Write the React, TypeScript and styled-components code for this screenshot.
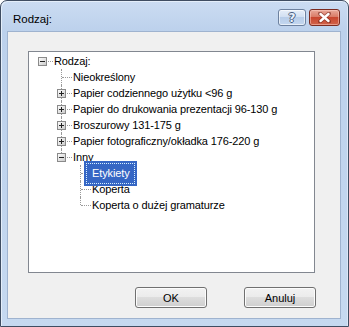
import React from 'react';
import styled, { createGlobalStyle, css } from 'styled-components';

const Global = createGlobalStyle`
  html, body { margin: 0; padding: 0; background: #ffffff; }
  body { width: 349px; height: 327px; overflow: hidden; }
  #root { width: 349px; height: 327px; }
`;

const Window = styled.div`
  box-sizing: border-box;
  width: 349px;
  height: 327px;
  border: 1px solid #3f4d62;
  border-radius: 7px 7px 0 0;
  background: linear-gradient(to bottom, #cbdcf2 0px, #bcd1ec 30px, #c1d5ee 60%, #c6d9f0 100%);
  box-shadow: inset 1px 1px 0 #e4eefa, inset -1px 0 0 #dbe7f6;
  display: flex;
  flex-direction: column;
  padding: 0 7px 7px 6px;
  font-family: "Liberation Sans", Arial, sans-serif;
`;

const TitleBar = styled.div`
  height: 30px;
  display: flex;
  align-items: flex-start;
  justify-content: space-between;
`;

const Title = styled.div`
  padding: 10px 0 0 6px;
  font-size: 11.5px;
  line-height: 16px;
  color: #000;
`;

const CaptionButtons = styled.div`
  display: flex;
  gap: 3px;
  padding-top: 8px;
  margin-right: 1px;
`;

const CaptionButton = styled.div<{ $kind: 'help' | 'close' }>`
  box-sizing: border-box;
  height: 17px;
  border-radius: 3px;
  display: flex;
  align-items: center;
  justify-content: center;
  ${p =>
    p.$kind === 'help'
      ? css`
          width: 28px;
          border: 1px solid #6d819f;
          background: linear-gradient(to bottom, #e6eef9 0%, #d2e0f2 45%, #b8cde9 50%, #c4d7ef 100%);
          box-shadow: inset 0 0 0 1px rgba(255, 255, 255, 0.6);
        `
      : css`
          width: 31px;
          border: 1px solid #7b2b20;
          background: linear-gradient(to bottom, #e9a99a 0%, #d97b67 45%, #c9462f 50%, #d0634a 100%);
          box-shadow: inset 0 0 0 1px rgba(255, 210, 200, 0.5);
        `}
`;

const HelpGlyph = styled.span`
  font-family: "DejaVu Sans", sans-serif;
  font-size: 12px;
  font-weight: bold;
  line-height: 12px;
  color: #e8f0fb;
  text-shadow: 1px 0 0 #4a5f80, -1px 0 0 #4a5f80, 0 1px 0 #4a5f80, 0 -1px 0 #4a5f80;
`;

const Client = styled.div`
  flex: 1;
  box-sizing: border-box;
  background: #f0f0f0;
  border: 1px solid #9fb3cf;
  padding: 19px 0 0 20px;
  display: flex;
  flex-direction: column;
`;

const Column = styled.div`
  width: 288px;
  display: flex;
  flex-direction: column;
`;

const TreeBox = styled.div`
  box-sizing: border-box;
  width: 287px;
  height: 222px;
  border: 1px solid #828790;
  background: #ffffff;
  padding: 1px 0 0 4px;
  display: flex;
  flex-direction: column;
  font-size: 11px;
  letter-spacing: -0.12px;
  color: #000;
`;

const Row = styled.div`
  display: flex;
  align-items: center;
  height: 16px;
`;

type CellKind = 'none' | 'pipe' | 'tee' | 'elbow' | 'root';

const dot = '#9a9a9a';

const Gutter = styled.div<{ $kind: CellKind }>`
  position: relative;
  width: 19px;
  height: 16px;
  flex: none;
  display: flex;
  align-items: center;
  padding-left: 5px;
  box-sizing: border-box;
  ${p =>
    (p.$kind === 'pipe' || p.$kind === 'tee' || p.$kind === 'elbow') &&
    css`
      &::before {
        content: '';
        position: absolute;
        left: 9px;
        top: 0;
        height: ${p.$kind === 'elbow' ? '8px' : '16px'};
        border-left: 1px dotted ${dot};
      }
    `}
  ${p =>
    (p.$kind === 'tee' || p.$kind === 'elbow' || p.$kind === 'root') &&
    css`
      &::after {
        content: '';
        position: absolute;
        left: 10px;
        top: 8px;
        width: 10px;
        border-top: 1px dotted ${dot};
      }
    `}
`;

const ExpanderSvg = styled.svg`
  position: relative;
  z-index: 1;
  display: block;
`;

const Expander = ({ open }: { open: boolean }) => (
  <ExpanderSvg width="9" height="9" viewBox="0 0 9 9">
    <defs>
      <linearGradient id="expg" x1="0" y1="0" x2="1" y2="1">
        <stop offset="0" stopColor="#ffffff" />
        <stop offset="1" stopColor="#c8c8c8" />
      </linearGradient>
    </defs>
    <rect x="0.5" y="0.5" width="8" height="8" fill="url(#expg)" stroke="#8a8a8a" />
    <rect x="2" y="4" width="5" height="1" fill="#222" />
    {!open && <rect x="4" y="2" width="1" height="5" fill="#222" />}
  </ExpanderSvg>
);

const Label = styled.span<{ $selected?: boolean }>`
  white-space: nowrap;
  line-height: 16px;
  margin-left: 2px;
  ${p =>
    p.$selected &&
    css`
      position: relative;
      z-index: 2;
      margin-left: -6px;
      height: 25px;
      line-height: 25px;
      padding: 0 7px 0 8px;
      background: #3566c4;
      color: #ffffff;
      outline: 1px dotted #d6efff;
      outline-offset: -3px;
    `}
`;

const ButtonRow = styled.div`
  margin-top: 14px;
  display: flex;
  justify-content: flex-end;
  gap: 37px;
`;

const Button = styled.button`
  box-sizing: border-box;
  width: 72px;
  height: 21px;
  border: 1px solid #707070;
  border-radius: 3px;
  background: linear-gradient(to bottom, #f2f2f2 0%, #ebebeb 49%, #dddddd 50%, #cfcfcf 100%);
  box-shadow: inset 0 0 0 1px #fcfcfc;
  font-family: "Liberation Sans", Arial, sans-serif;
  font-size: 11px;
  color: #000;
  padding: 0;
`;

interface TreeNode {
  label: string;
  cells: CellKind[];
  exp?: 'plus' | 'minus';
  selected?: boolean;
}

const nodes: TreeNode[] = [
  { label: 'Rodzaj:', cells: ['root'], exp: 'minus' },
  { label: 'Nieokreślony', cells: ['none', 'tee'] },
  { label: 'Papier codziennego użytku <96 g', cells: ['none', 'tee'], exp: 'plus' },
  { label: 'Papier do drukowania prezentacji 96-130 g', cells: ['none', 'tee'], exp: 'plus' },
  { label: 'Broszurowy 131-175 g', cells: ['none', 'tee'], exp: 'plus' },
  { label: 'Papier fotograficzny/okładka 176-220 g', cells: ['none', 'tee'], exp: 'plus' },
  { label: 'Inny', cells: ['none', 'elbow'], exp: 'minus' },
  { label: 'Etykiety', cells: ['none', 'none', 'tee'], selected: true },
  { label: 'Koperta', cells: ['none', 'none', 'tee'] },
  { label: 'Koperta o dużej gramaturze', cells: ['none', 'none', 'elbow'] },
];

const CloseIcon = () => (
  <svg width="13" height="11" viewBox="0 0 13 11">
    <path
      d="M2 1.5 L11 9.5 M11 1.5 L2 9.5"
      stroke="#6b1e14"
      strokeWidth="4"
      strokeLinecap="round"
      opacity="0.55"
    />
    <path d="M2.5 2 L10.5 9 M10.5 2 L2.5 9" stroke="#ffffff" strokeWidth="2.4" strokeLinecap="round" />
  </svg>
);

export default function App() {
  return (
    <>
      <Global />
      <Window>
        <TitleBar>
          <Title>Rodzaj:</Title>
          <CaptionButtons>
            <CaptionButton $kind="help">
              <HelpGlyph>?</HelpGlyph>
            </CaptionButton>
            <CaptionButton $kind="close">
              <CloseIcon />
            </CaptionButton>
          </CaptionButtons>
        </TitleBar>
        <Client>
          <Column>
            <TreeBox>
              {nodes.map(n => (
                <Row key={n.label}>
                  {n.cells.map((c, i) => (
                    <Gutter key={i} $kind={c}>
                      {i === n.cells.length - 1 && n.exp && <Expander open={n.exp === 'minus'} />}
                    </Gutter>
                  ))}
                  <Label $selected={n.selected}>{n.label}</Label>
                </Row>
              ))}
            </TreeBox>
            <ButtonRow>
              <Button>OK</Button>
              <Button>Anuluj</Button>
            </ButtonRow>
          </Column>
        </Client>
      </Window>
    </>
  );
}
